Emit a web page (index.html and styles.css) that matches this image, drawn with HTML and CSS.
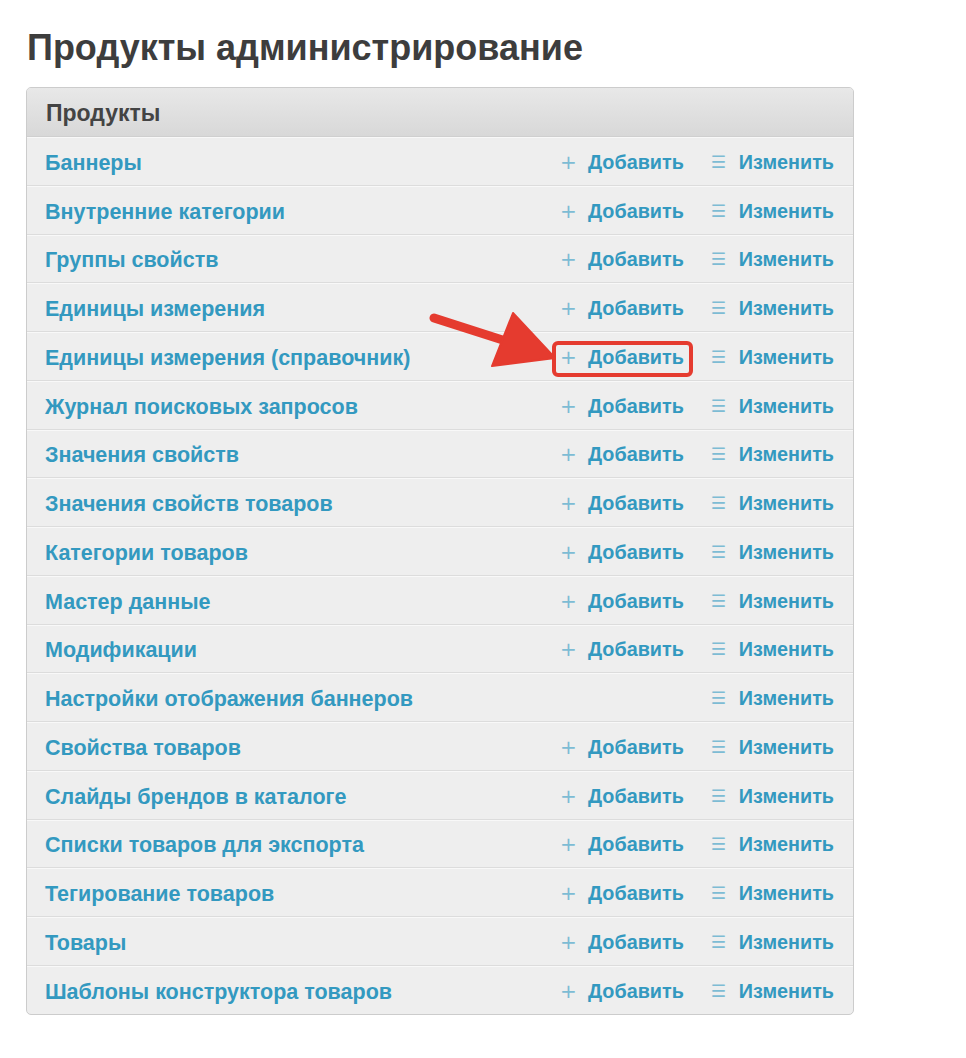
FILE: index.html
```html
<!DOCTYPE html>
<html lang="ru">
<head>
<meta charset="utf-8">
<title>Продукты администрирование</title>
<link rel="stylesheet" href="styles.css">
</head>
<body>
<div class="page">
  <h1 class="title">Продукты администрирование</h1>
  <div class="panel">
    <div class="panel-head">Продукты</div>
    <div class="rows">
      <div class="row"><a class="name">Баннеры</a><span class="acts"><a class="act add"><span class="ic">+</span>Добавить</a><a class="act edit"><span class="ic">☰</span>Изменить</a></span></div>
      <div class="row"><a class="name">Внутренние категории</a><span class="acts"><a class="act add"><span class="ic">+</span>Добавить</a><a class="act edit"><span class="ic">☰</span>Изменить</a></span></div>
      <div class="row"><a class="name">Группы свойств</a><span class="acts"><a class="act add"><span class="ic">+</span>Добавить</a><a class="act edit"><span class="ic">☰</span>Изменить</a></span></div>
      <div class="row"><a class="name">Единицы измерения</a><span class="acts"><a class="act add"><span class="ic">+</span>Добавить</a><a class="act edit"><span class="ic">☰</span>Изменить</a></span></div>
      <div class="row"><a class="name">Единицы измерения (справочник)</a><span class="acts"><a class="act add marked"><span class="ic">+</span>Добавить</a><a class="act edit"><span class="ic">☰</span>Изменить</a></span></div>
      <div class="row"><a class="name">Журнал поисковых запросов</a><span class="acts"><a class="act add"><span class="ic">+</span>Добавить</a><a class="act edit"><span class="ic">☰</span>Изменить</a></span></div>
      <div class="row"><a class="name">Значения свойств</a><span class="acts"><a class="act add"><span class="ic">+</span>Добавить</a><a class="act edit"><span class="ic">☰</span>Изменить</a></span></div>
      <div class="row"><a class="name">Значения свойств товаров</a><span class="acts"><a class="act add"><span class="ic">+</span>Добавить</a><a class="act edit"><span class="ic">☰</span>Изменить</a></span></div>
      <div class="row"><a class="name">Категории товаров</a><span class="acts"><a class="act add"><span class="ic">+</span>Добавить</a><a class="act edit"><span class="ic">☰</span>Изменить</a></span></div>
      <div class="row"><a class="name">Мастер данные</a><span class="acts"><a class="act add"><span class="ic">+</span>Добавить</a><a class="act edit"><span class="ic">☰</span>Изменить</a></span></div>
      <div class="row"><a class="name">Модификации</a><span class="acts"><a class="act add"><span class="ic">+</span>Добавить</a><a class="act edit"><span class="ic">☰</span>Изменить</a></span></div>
      <div class="row"><a class="name">Настройки отображения баннеров</a><span class="acts"><a class="act edit"><span class="ic">☰</span>Изменить</a></span></div>
      <div class="row"><a class="name">Свойства товаров</a><span class="acts"><a class="act add"><span class="ic">+</span>Добавить</a><a class="act edit"><span class="ic">☰</span>Изменить</a></span></div>
      <div class="row"><a class="name">Слайды брендов в каталоге</a><span class="acts"><a class="act add"><span class="ic">+</span>Добавить</a><a class="act edit"><span class="ic">☰</span>Изменить</a></span></div>
      <div class="row"><a class="name">Списки товаров для экспорта</a><span class="acts"><a class="act add"><span class="ic">+</span>Добавить</a><a class="act edit"><span class="ic">☰</span>Изменить</a></span></div>
      <div class="row"><a class="name">Тегирование товаров</a><span class="acts"><a class="act add"><span class="ic">+</span>Добавить</a><a class="act edit"><span class="ic">☰</span>Изменить</a></span></div>
      <div class="row"><a class="name">Товары</a><span class="acts"><a class="act add"><span class="ic">+</span>Добавить</a><a class="act edit"><span class="ic">☰</span>Изменить</a></span></div>
      <div class="row"><a class="name">Шаблоны конструктора товаров</a><span class="acts"><a class="act add"><span class="ic">+</span>Добавить</a><a class="act edit"><span class="ic">☰</span>Изменить</a></span></div>
    </div>
  </div>
</div>
<svg class="arrow" width="966" height="1058" viewBox="0 0 966 1058">
  <line x1="434" y1="318" x2="512" y2="343" stroke="#e53b2f" stroke-width="9" stroke-linecap="round"/>
  <polygon points="513,313 555,358 492,366" fill="#e53b2f" stroke="#e53b2f" stroke-width="2" stroke-linejoin="round"/>
</svg>
</body>
</html>
```

FILE: styles.css
```css
html, body {
  margin: 0;
  padding: 0;
  background: #ffffff;
}
body {
  font-family: "Liberation Sans", Arial, Helvetica, sans-serif;
  position: relative;
  width: 966px;
  height: 1058px;
  overflow: hidden;
}
.page {
  padding: 26px 0 0 26px;
  width: 828px;
}
.title {
  margin: 0 0 17px 1px;
  font-size: 36px;
  line-height: 44px;
  font-weight: bold;
  color: #3d3d3d;
}
.panel {
  border: 1px solid #cccccc;
  border-radius: 5px;
  background: #eeeeee;
  overflow: hidden;
}
.panel-head {
  height: 48px;
  line-height: 51px;
  padding: 0 19px;
  font-size: 23px;
  font-weight: bold;
  color: #444444;
  background: linear-gradient(#e8e8e8, #d8d8d8);
  border-bottom: 1px solid #cfcfcf;
}
.row {
  display: flex;
  align-items: center;
  justify-content: space-between;
  height: 45.75px;
  padding: 2px 19px 0 18px;
  border-top: 1px solid #dcdcdc;
  box-shadow: inset 0 1px 0 #f8f8f8;
  font-weight: bold;
}
.rows .row:first-child {
  border-top: none;
}
.name, .act {
  color: #3399c0;
  text-decoration: none;
}
.name {
  font-size: 21.5px;
  padding-top: 3px;
}
.acts {
  display: flex;
  align-items: center;
  gap: 27px;
  font-size: 19.8px;
}
.act {
  display: flex;
  align-items: center;
  position: relative;
  line-height: 24px;
}
.ic {
  display: inline-block;
  width: 14px;
  margin-right: 14px;
  color: #7dbcd4;
  font-weight: normal;
  font-family: "DejaVu Sans", sans-serif;
  font-size: 17px;
  text-align: center;
}
.edit .ic {
  font-weight: bold;
}
.add .ic {
  font-size: 20px;
}
.marked::after {
  content: "";
  position: absolute;
  left: -8px;
  right: -9px;
  top: -4px;
  bottom: -8px;
  border: 4px solid #e53b2f;
  border-radius: 6px;
}
.arrow {
  position: absolute;
  left: 0;
  top: 0;
  pointer-events: none;
}
```
